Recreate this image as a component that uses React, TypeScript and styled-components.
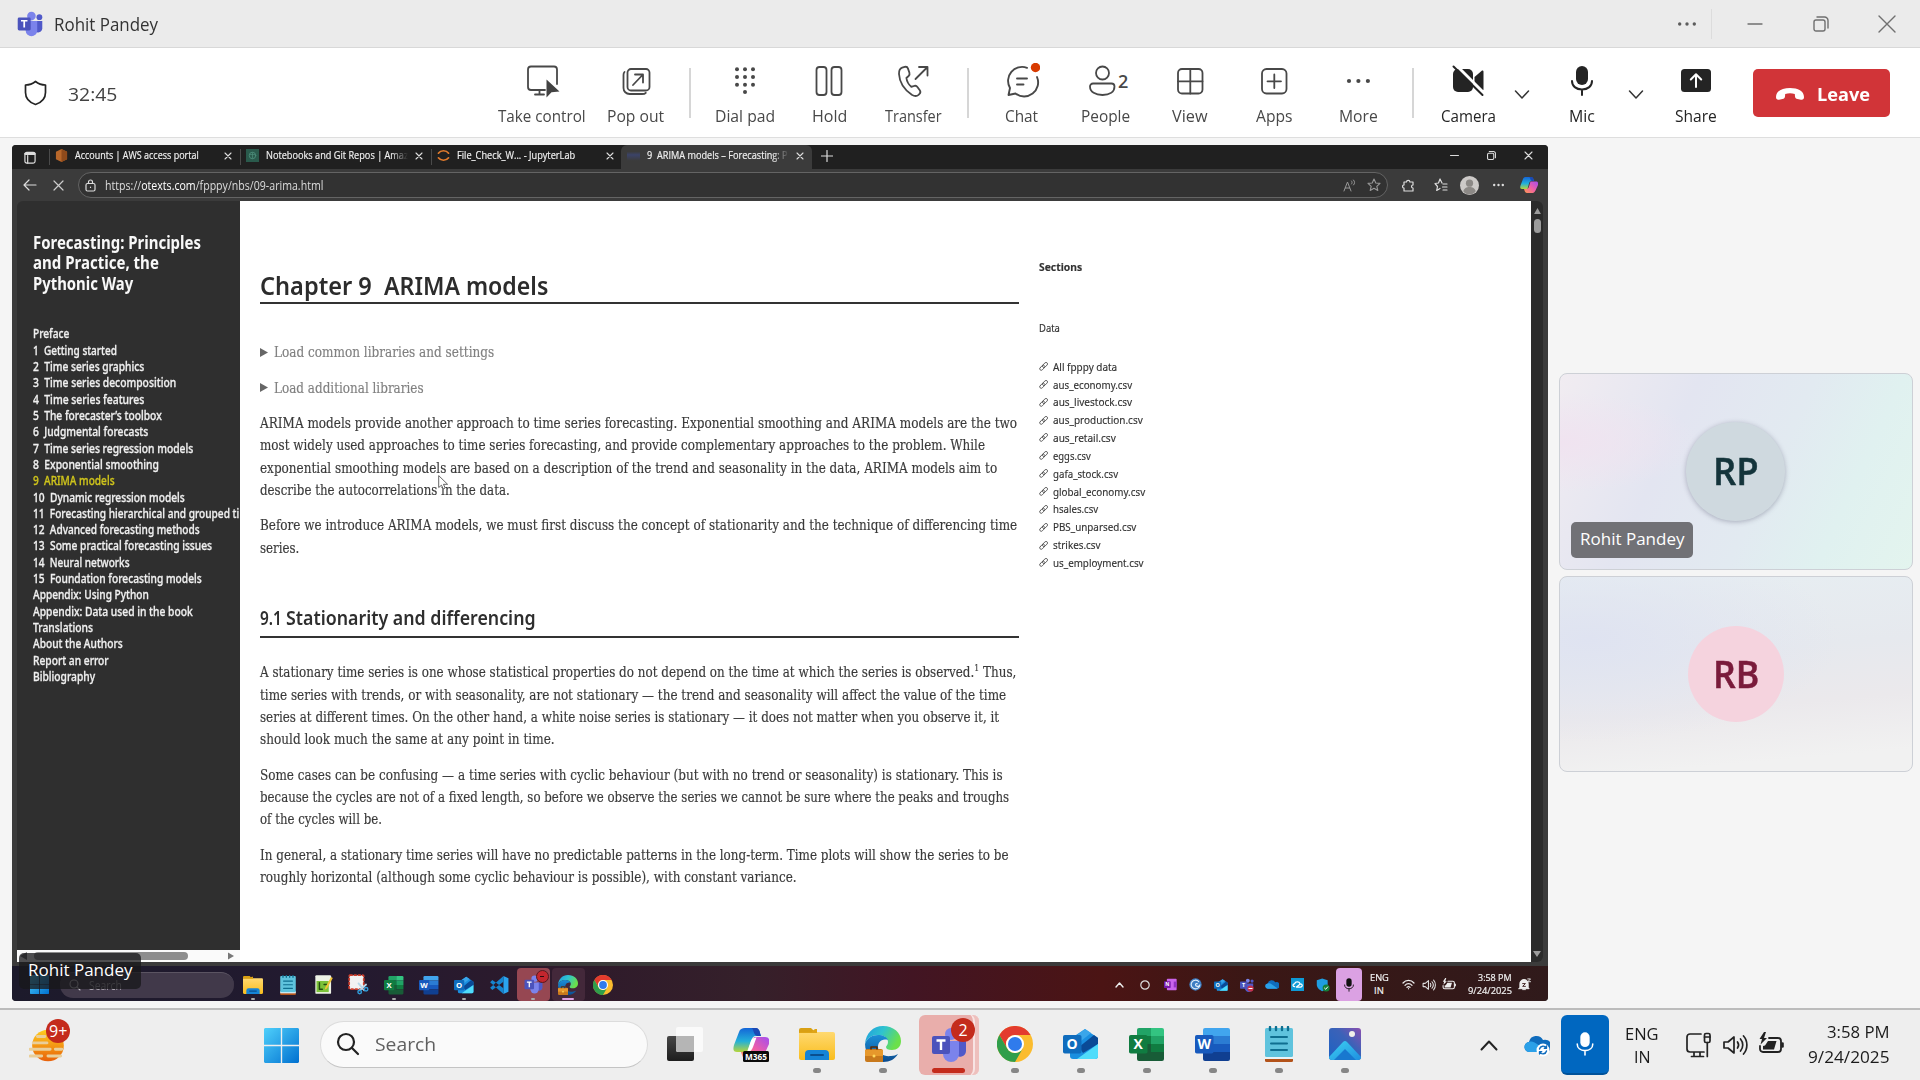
import React, { useLayoutEffect, useRef, useState } from "react";
import styled, { createGlobalStyle } from "styled-components";

const UI = `"Open Sans", "Noto Sans", sans-serif`;
const BOOK = `"Noto Sans", "Open Sans", sans-serif`;
const SERIF = `"DejaVu Serif Condensed", "DejaVu Serif", "Liberation Serif", serif`;

const Global = createGlobalStyle`
  * { box-sizing: border-box; }
  html, body { margin: 0; padding: 0; }
  body { width: 1920px; height: 1080px; overflow: hidden; background: #f5f5f5; font-family: ${UI}; }
  svg { display: block; flex: none; }
`;

/* Text condensed or widened so that it takes exactly the given width */
const FitBox = styled.span<{ $w: number }>`
  display: inline-block;
  flex: none;
  width: ${(p) => p.$w}px;
  white-space: pre;
`;
const FitInner = styled.span`
  display: inline-block;
  transform-origin: 0 50%;
  white-space: pre;
`;
function Fit({ w, children }: { w: number; children: React.ReactNode }) {
  const ref = useRef<HTMLSpanElement>(null);
  const [k, setK] = useState(1);
  useLayoutEffect(() => {
    const el = ref.current;
    if (el && el.offsetWidth) setK(w / el.offsetWidth);
  }, [w]);
  return (
    <FitBox $w={w}>
      <FitInner ref={ref} style={{ transform: `scaleX(${k})` }}>{children}</FitInner>
    </FitBox>
  );
}

const Screen = styled.div`
  width: 1920px;
  height: 1080px;
  display: flex;
  flex-direction: column;
  overflow: hidden;
  background: #f5f5f5;
`;

/* ---------- window title bar ---------- */
const TitleBar = styled.header`
  height: 48px;
  flex: none;
  display: flex;
  align-items: center;
  padding-left: 17px;
  background: #ebebeb;
  border-bottom: 1px solid #d8d8d8;
`;
const TitleText = styled.div`
  margin-left: 11px;
  font-size: 17.5px;
  line-height: 24px;
  color: #333;
`;
const WindowTools = styled.div`
  margin-left: auto;
  display: flex;
  align-items: center;
  height: 47px;
`;
const ToolSlot = styled.div<{ $w: number }>`
  width: ${(p) => p.$w}px;
  height: 100%;
  flex: none;
  display: flex;
  align-items: center;
  justify-content: center;
`;
const TitleRule = styled.div`
  width: 1px;
  height: 30px;
  background: #dcdcdc;
`;

/* ---------- call toolbar ---------- */
const CallBar = styled.div`
  height: 90px;
  flex: none;
  display: flex;
  background: #fff;
  border-bottom: 1px solid #dedede;
`;
const CallInfo = styled.div`
  width: 495px;
  flex: none;
  display: flex;
  align-items: center;
  padding-left: 24px;
`;
const Timer = styled.div`
  margin-left: 21px;
  padding-top: 3px;
  font-size: 19px;
  line-height: 26px;
  color: #424242;
`;
const CallButton = styled.button<{ $w: number; $dark?: boolean; $ml?: number }>`
  width: ${(p) => p.$w}px;
  margin: 0 0 0 ${(p) => p.$ml ?? 0}px;
  padding: 15px 0 0;
  flex: none;
  border: 0;
  background: none;
  display: flex;
  flex-direction: column;
  align-items: center;
  font: 400 16.5px/24px ${UI};
  color: ${(p) => (p.$dark ? "#242424" : "#484848")};
`;
const CallLabel = styled.div`
  margin-top: 5px;
  height: 24px;
`;
const PeopleIcon = styled.div`
  position: relative;
  height: 36px;
  width: 36px;
`;
const Count = styled.span`
  position: absolute;
  left: 30px;
  top: 6px;
  font-weight: 600;
  font-size: 18px;
  line-height: 24px;
`;
const BarRule = styled.div<{ $w: number }>`
  width: ${(p) => p.$w}px;
  flex: none;
  padding-top: 20px;
  display: flex;
  justify-content: center;
  &::after {
    content: "";
    width: 2px;
    height: 50px;
    background: #d6d6d6;
  }
`;
const Chevron = styled.div<{ $w: number }>`
  width: ${(p) => p.$w}px;
  flex: none;
  display: flex;
  justify-content: center;
  padding-top: 41px;
`;
const LeaveButton = styled.button`
  width: 137px;
  height: 48px;
  margin: 21px 0 0 3px;
  flex: none;
  display: flex;
  align-items: center;
  gap: 12px;
  padding: 2px 0 0 22px;
  border: 0;
  border-radius: 5px;
  background: #d13438;
  color: #fff;
  font: 700 18.5px/26px ${UI};
`;

/* ---------- meeting stage ---------- */
const Stage = styled.main`
  height: 870px;
  flex: none;
  display: flex;
  padding: 7px 7px 7px 12px;
  gap: 11px;
`;
const Shared = styled.section`
  position: relative;
  width: 1536px;
  height: 856px;
  flex: none;
  display: flex;
  flex-direction: column;
  border-radius: 4px;
  overflow: hidden;
  background: #3b3b3b;
`;
const TabStrip = styled.div`
  height: 24px;
  flex: none;
  display: flex;
  align-items: center;
  background: #202020;
  color: #f0f0f0;
`;
const Tab = styled.div<{ $active?: boolean }>`
  width: 190.8px;
  height: 24px;
  flex: none;
  display: flex;
  align-items: center;
  padding: 0 0 3px 6px;
  font-size: 11.5px;
  font-weight: 500;
  line-height: 16px;
  background: ${(p) => (p.$active ? "#3b3b3b" : "none")};
  border-radius: ${(p) => (p.$active ? "6px 6px 0 0" : "0")};
  background-image: ${(p) => (p.$active ? "none" : "linear-gradient(#4a4a4a, #4a4a4a)")};
  background-size: 1px 16px;
  background-position: 0 4px;
  background-repeat: no-repeat;
`;
const TabTitle = styled.div<{ $fade?: boolean }>`
  width: 142px;
  margin: -1px 7px 0 7px;
  overflow: hidden;
  -webkit-text-stroke: 0.2px currentColor;
  mask-image: ${(p) => (p.$fade ? "linear-gradient(90deg, #000 88%, transparent)" : "none")};
`;
const ActiveFavicon = styled.div`
  width: 13px;
  height: 13px;
  flex: none;
  background: linear-gradient(#3b3b3b 20%, #3b4368 45%, #3b3b3b 90%);
`;
const TabControls = styled.div`
  margin-left: auto;
  height: 24px;
  display: flex;
  padding: 0 1px 3px 0;
`;
const NavBar = styled.div`
  height: 32px;
  flex: none;
  display: flex;
  align-items: center;
  padding: 0 5px 0 3px;
`;
const Address = styled.div`
  width: 1310px;
  height: 26px;
  margin: 0 6px 0 5px;
  flex: none;
  display: flex;
  align-items: center;
  padding: 0 6px;
  border: 1px solid #646464;
  border-radius: 13px;
  background: #323232;
  color: #dcdcdc;
  font-size: 13px;
  line-height: 18px;
`;
const Url = styled.div`
  margin-left: 9px;
  margin-right: auto;
  & b { font-weight: 400; color: #fff; }
`;
const NavRule = styled.div`
  width: 1px;
  height: 13px;
  margin: 0 1px 0 2px;
  background: #5a5a5a;
`;

const PageRow = styled.div`
  height: 761px;
  flex: none;
  display: flex;
  padding: 0 5px;
`;
const Book = styled.nav`
  width: 223px;
  flex: none;
  display: flex;
  flex-direction: column;
  overflow: hidden;
  border-top-left-radius: 6px;
  background: #2f2f2f;
  color: #f8f8f8;
  font-family: ${BOOK};
`;
const BookTitle = styled.h2`
  margin: 32px 0 0 16px;
  font-size: 17px;
  font-weight: 700;
  line-height: 20.4px;
`;
const Toc = styled.ul`
  list-style: none;
  margin: 32px 0 0;
  padding: 0 0 0 16px;
  flex: 1;
  overflow: hidden;
  -webkit-text-stroke: 0.3px currentColor;
`;
const TocItem = styled.li<{ $on?: boolean }>`
  height: 16.33px;
  font-size: 12.4px;
  font-weight: 500;
  line-height: 16.33px;
  color: ${(p) => (p.$on ? "#cfc41c" : "#f0f0f0")};
`;
const HScroll = styled.div`
  height: 12px;
  flex: none;
  display: flex;
  align-items: center;
  padding: 0 6px 0 3px;
  background: #fafafa;
`;
const HThumb = styled.div`
  width: 154px;
  height: 8px;
  margin-left: 7px;
  margin-right: auto;
  border-radius: 4px;
  background: #8d8d8d;
`;
const Paper = styled.div`
  width: 1291px;
  flex: none;
  display: flex;
  background: #fff;
  padding-left: 19.5px;
  overflow: hidden;
`;
const Article = styled.article`
  width: 759.5px;
  flex: none;
  color: #3a3a3a;
  font: 400 14px/22.35px ${SERIF};
`;
const H1 = styled.h1`
  margin: 70px 0 37.3px;
  height: 33px;
  border-bottom: 2px solid #333;
  font: 600 25px/29px ${BOOK};
  color: #2c2c2c;
`;
const H2 = styled.h2`
  margin: 45px 0 23.5px;
  height: 33.8px;
  border-bottom: 2px solid #333;
  font: 600 19.5px/27px ${BOOK};
  color: #2e2e2e;
`;
const Details = styled.div`
  height: 22.35px;
  margin-bottom: 13px;
  display: flex;
  align-items: center;
  gap: 6px;
  color: #808080;
  -webkit-text-stroke: 0.15px currentColor;
`;
const P = styled.p`
  margin: 0 0 13px;
  -webkit-text-stroke: 0.15px currentColor;
`;
const Line = styled.span`
  display: block;
  height: 22.35px;
`;
const Sup = styled.sup`
  font-size: 9px;
  line-height: 0;
`;
const Aside = styled.aside`
  margin-left: 19.5px;
  padding-top: 56.5px;
  font: 400 10.8px/17.85px ${BOOK};
  color: #333;
  -webkit-text-stroke: 0.15px currentColor;
`;
const AsideHead = styled.div<{ $bold?: boolean; $gap: number }>`
  height: 17.85px;
  margin-bottom: ${(p) => p.$gap}px;
  font-weight: ${(p) => (p.$bold ? 700 : 400)};
`;
const FileRow = styled.div`
  height: 17.85px;
  display: flex;
  align-items: center;
  gap: 5px;
`;
const VScroll = styled.div`
  width: 12px;
  flex: none;
  display: flex;
  flex-direction: column;
  align-items: center;
  padding: 7px 0 5px;
  border-radius: 0 6px 6px 0;
  background: #2b2b2b;
`;
const VThumb = styled.div`
  width: 7px;
  height: 14px;
  margin: 5px 0 auto;
  border-radius: 4px;
  background: #9c9c9c;
`;

const InnerBar = styled.div`
  height: 35px;
  margin-top: auto;
  flex: none;
  display: flex;
  align-items: center;
  padding-top: 2px;
  background: linear-gradient(90deg, #1c1a2b 0, #231a30 330px, #2e1a2b 560px, #35202a 740px, #421523 900px, #4b1414 1090px, #3a1715 1240px, #301a1b 1536px);
  color: #f2f2f2;
`;
const InnerSearch = styled.div`
  width: 174px;
  height: 26px;
  margin: 0 1.5px 0 11px;
  display: flex;
  align-items: center;
  gap: 8px;
  padding-left: 9px;
  border-radius: 13px;
  background: #41394a;
  border-top: 1px solid #5b5462;
  font-size: 12px;
  color: #a9a4ae;
`;
const InnerSlot = styled.div<{ $w: number; $tile?: string }>`
  position: relative;
  width: ${(p) => p.$w}px;
  height: 33px;
  flex: none;
  display: flex;
  align-items: center;
  justify-content: center;
  border-radius: 4px;
  background: ${(p) => p.$tile ?? "none"};
`;
const InnerMark = styled.span<{ $wide?: boolean }>`
  position: absolute;
  bottom: 1px;
  left: calc(50% - ${(p) => (p.$wide ? 6 : 2)}px);
  width: ${(p) => (p.$wide ? 12 : 4)}px;
  height: 2px;
  border-radius: 1px;
  background: ${(p) => (p.$wide ? "#dda0e2" : "#aaa")};
`;
const BusyDot = styled.span`
  position: absolute;
  right: 1px;
  top: 2px;
  width: 13px;
  height: 13px;
  border-radius: 50%;
  background: #c4262e;
  border: 1px solid #571a20;
  &::after {
    content: "";
    position: absolute;
    left: 3.5px;
    top: 5px;
    width: 4px;
    height: 1px;
    background: #2b0c0e;
  }
`;
const InnerTray = styled.div`
  margin-left: auto;
  display: flex;
  align-items: center;
`;
const InnerText = styled.div<{ $w: number; $align: string }>`
  width: ${(p) => p.$w}px;
  display: flex;
  flex-direction: column;
  align-items: ${(p) => p.$align};
  font-size: 9.5px;
  line-height: 12.7px;
  -webkit-text-stroke: 0.2px currentColor;
`;
const NameTag = styled.div<{ $left: number; $bottom: number; $bg: string }>`
  position: absolute;
  left: ${(p) => p.$left}px;
  bottom: ${(p) => p.$bottom}px;
  width: 122px;
  height: 36px;
  padding: 4px 0 0 9px;
  border-radius: 5px;
  background: ${(p) => p.$bg};
  color: #fff;
  font-size: 17px;
  line-height: 25px;
`;
const Pointer = styled.div`
  position: absolute;
  left: 426px;
  top: 330px;
`;

/* ---------- participants ---------- */
const Roster = styled.aside`
  width: 354px;
  flex: none;
  display: flex;
  flex-direction: column;
  gap: 6px;
  padding-top: 228px;
`;
const Tile = styled.div<{ $bg: string; $h: number }>`
  position: relative;
  height: ${(p) => p.$h}px;
  flex: none;
  display: flex;
  align-items: center;
  justify-content: center;
  padding: 0 1px 1px 0;
  border: 1px solid #cdd0d6;
  border-radius: 8px;
  background: ${(p) => p.$bg};
`;
const Avatar = styled.div<{ $size: number; $bg: string; $fg: string; $shadow?: boolean }>`
  width: ${(p) => p.$size}px;
  height: ${(p) => p.$size}px;
  padding-bottom: 2px;
  border-radius: 50%;
  display: flex;
  align-items: center;
  justify-content: center;
  background: ${(p) => p.$bg};
  color: ${(p) => p.$fg};
  box-shadow: ${(p) => (p.$shadow ? "0 1px 5px rgba(60,60,90,.35)" : "none")};
  font-weight: 600;
  font-size: 38px;
  line-height: 50px;
  -webkit-text-stroke: 0.5px currentColor;
`;

/* ---------- taskbar ---------- */
const TaskBar = styled.footer`
  height: 72px;
  flex: none;
  display: flex;
  align-items: center;
  border-top: 2px solid #bcbcbc;
  background: #eee;
`;
const Widget = styled.div`
  position: relative;
  width: 264px;
  flex: none;
  padding-left: 29px;
`;
const Badge = styled.span<{ $left: number; $top: number }>`
  position: absolute;
  left: ${(p) => p.$left}px;
  top: ${(p) => p.$top}px;
  width: 24px;
  height: 24px;
  padding-bottom: 1px;
  border-radius: 50%;
  display: flex;
  align-items: center;
  justify-content: center;
  background: #c42b1c;
  color: #fff;
  font-size: 16px;
  line-height: 22px;
`;
const SearchPill = styled.div`
  width: 328px;
  height: 47px;
  margin: -1px 4px 0 21px;
  flex: none;
  display: flex;
  align-items: center;
  gap: 15px;
  padding: 0 0 1px 15px;
  border: 1.5px solid #dcdcdc;
  border-bottom-color: #c4c4c4;
  border-radius: 24px;
  background: #fafafa;
  color: #606060;
  font-size: 19px;
  line-height: 28px;
`;
const AppSlot = styled.div`
  position: relative;
  width: 66px;
  height: 70px;
  flex: none;
  display: flex;
  align-items: center;
  justify-content: center;
  padding-bottom: 2px;
`;
const RunMark = styled.span<{ $active?: boolean }>`
  position: absolute;
  bottom: 7px;
  left: ${(p) => (p.$active ? 16 : 29)}px;
  width: ${(p) => (p.$active ? 33 : 8)}px;
  height: 5px;
  border-radius: 3px;
  background: ${(p) => (p.$active ? "#c42b1c" : "#868686")};
`;
const ActiveTile = styled.div`
  width: 60px;
  height: 60px;
  margin-top: 2px;
  display: flex;
  align-items: center;
  justify-content: center;
  border-radius: 6px;
  background: #e9aeab;
  box-shadow: inset -5px 0 0 -1px #eec0bd, inset -8px 0 0 -2px #f8e4e3;
`;
const Tray = styled.div`
  margin-left: auto;
  height: 70px;
  display: flex;
  align-items: center;
  color: #1b1b1b;
`;
const TraySlot = styled.div<{ $w: number }>`
  width: ${(p) => p.$w}px;
  flex: none;
  display: flex;
  justify-content: center;
`;
const MicTile = styled.div`
  width: 48px;
  height: 60px;
  flex: none;
  display: flex;
  align-items: center;
  justify-content: center;
  border-radius: 6px;
  background: #0067c0;
  border-bottom: 2px solid #00529a;
`;
const TrayText = styled.div<{ $w: number; $align: string; $lh: number; $lift: number }>`
  width: ${(p) => p.$w}px;
  flex: none;
  display: flex;
  flex-direction: column;
  align-items: ${(p) => p.$align};
  font-size: 17px;
  line-height: ${(p) => p.$lh}px;
  padding-bottom: ${(p) => p.$lift}px;
`;

/* ---------- icons ---------- */
type G = { w?: number; h?: number; vb?: string; children?: React.ReactNode };
const Svg = ({ w = 36, h = w, vb = "0 0 36 36", children }: G) => (
  <svg width={w} height={h} viewBox={vb} fill="none" strokeLinecap="round" strokeLinejoin="round">{children}</svg>
);
const Ink = ({ children, c = "#484848", s = 2, ...r }: G & { c?: string; s?: number }) => (
  <Svg {...r}><g stroke={c} strokeWidth={s}>{children}</g></Svg>
);

const TeamsIcon = ({ s }: { s: number }) => (
  <Svg w={s}>
    <circle cx="20" cy="7" r="6" fill="#7b83eb" />
    <circle cx="31" cy="8.5" r="4" fill="#5059c9" />
    <path d="M24 14h11v10a6 6 0 0 1-11 3z" fill="#5059c9" />
    <path d="M12 14h16v13a8 8 0 0 1-16 0z" fill="#7b83eb" />
    <rect x="1" y="9" width="18" height="18" rx="2" fill="#4b53bc" />
    <path d="M5.5 13.5h9M10 13.5v9.5" stroke="#fff" strokeWidth="2.4" strokeLinecap="butt" />
  </Svg>
);
const Letter = ({ c, ch }: { c: string; ch: string }) => (
  <>
    <rect x="0" y="9" width="18.5" height="18.5" rx="1.8" fill={c} />
    <text x="9.2" y="23.4" textAnchor="middle" fontFamily="Open Sans, sans-serif" fontWeight="700" fontSize="14" fill="#fff">{ch}</text>
  </>
);
const ExcelIcon = ({ s }: { s: number }) => (
  <Svg w={s}>
    <path d="M8 10h14V2H10a2 2 0 0 0-2 2z" fill="#21a366" /><path d="M22 2h11a2 2 0 0 1 2 2v6H22z" fill="#33c481" />
    <path d="M22 10h13v8H22z" fill="#21a366" /><path d="M8 10h14v8H8z" fill="#107c41" />
    <path d="M22 18h13v8H22z" fill="#107c41" /><path d="M8 18h14v8H8zM8 26h27v7a2 2 0 0 1-2 2H10a2 2 0 0 1-2-2z" fill="#185c37" />
    <Letter c="#107c41" ch="X" />
  </Svg>
);
const WordIcon = ({ s }: { s: number }) => (
  <Svg w={s}>
    <path d="M8 10V4a2 2 0 0 1 2-2h23a2 2 0 0 1 2 2v6z" fill="#41a5ee" />
    <path d="M8 10h27v8H8z" fill="#2b7cd3" /><path d="M8 18h27v8H8z" fill="#185abd" />
    <path d="M8 26h27v7a2 2 0 0 1-2 2H10a2 2 0 0 1-2-2z" fill="#103f91" />
    <Letter c="#185abd" ch="W" />
  </Svg>
);
const OutlookIcon = ({ s }: { s: number }) => (
  <Svg w={s}>
    <path d="M7 13 22 3l13 9v18a3 3 0 0 1-3 3H10a3 3 0 0 1-3-3z" fill="#1a8fe0" />
    <path d="M10 12 22 3l6 4-15 12z" fill="#3aa6ea" />
    <path d="M16 21 31 9l4 3v6L20 27z" fill="#0a4a96" />
    <path d="M14 33 35 18v12a3 3 0 0 1-3 3z" fill="#4fdcfb" />
    <Letter c="#0f6cbd" ch="O" />
  </Svg>
);
const FolderIcon = ({ s }: { s: number }) => (
  <Svg w={s}>
    <path d="M0 4a2 2 0 0 1 2-2h10l4 4H0z" fill="#d9a013" /><path d="M0 6h34a2 2 0 0 1 2 2v24a2 2 0 0 1-2 2H2a2 2 0 0 1-2-2z" fill="url(#fold)" />
    <path d="M0 6h12l4-3h2v4H0z" fill="#dfa516" />
    <path d="M6 34V28a4 4 0 0 1 4-4h16a4 4 0 0 1 4 4v6z" fill="#1584d6" />
    <path d="M12 29h12" stroke="#0a4f8f" strokeWidth="2" />
    <defs><linearGradient id="fold" x1="0" y1="0" x2="0" y2="1"><stop stopColor="#ffd970" /><stop offset="1" stopColor="#f9bd1d" /></linearGradient></defs>
  </Svg>
);
const EdgeIcon = ({ s }: { s: number }) => (
  <Svg w={s}>
    <defs>
      <linearGradient id="eg1" x1="0" y1="0" x2="1" y2=".4"><stop stopColor="#1f9be0" /><stop offset=".5" stopColor="#2fc3cf" /><stop offset="1" stopColor="#6be04a" /></linearGradient>
      <linearGradient id="eg2" x1="0" y1="0" x2="0" y2="1"><stop stopColor="#1b8fd8" /><stop offset="1" stopColor="#0c4c8f" /></linearGradient>
    </defs>
    <path d="M0 18C1 7 8 0 18 0c11 0 18 7 18 15 0 6-4 9-9 9-4 0-6-1-6-3 0-1 2-2 2-5 0-4-4-7-10-7C7 9 2 12 0 18z" fill="url(#eg1)" />
    <path d="M0 18c2-6 7-9 13-9 5 0 9 2 10 5-7-2-10 3-10 7 0 6 6 10 13 9 3 0 5-1 7-2-3 5-8 8-15 8C8 36 0 28 0 18z" fill="url(#eg2)" />
    <path d="M0 25a2 2 0 0 1 2-2h14a2 2 0 0 1 2 2v11H2a2 2 0 0 1-2-2z" fill="#c8791c" /><path d="M0 24h18v6H0z" fill="#e6982c" />
    <path d="M6 23v-2h6v2" stroke="#5b2b06" strokeWidth="1.6" /><circle cx="9" cy="30" r="1.5" fill="#ffd75a" />
  </Svg>
);
const ChromeIcon = ({ s }: { s: number }) => (
  <Svg w={s}>
    <circle cx="18" cy="18" r="18" fill="#fbbc2e" />
    <path d="M2.4 9A18 18 0 0 1 33.6 9H18a9 9 0 0 0-7.8 13.5z" fill="#e33b2e" />
    <path d="M2.4 9A18 18 0 0 0 18 36l7.8-13.5A9 9 0 0 1 10.2 22.5z" fill="#2f9e4b" />
    <circle cx="18" cy="18" r="9" fill="#fff" /><circle cx="18" cy="18" r="7" fill="#2f7bec" />
  </Svg>
);
const NotepadIcon = ({ s }: { s: number }) => (
  <Svg w={s}>
    <rect x="4" y="29" width="28" height="7" rx="1.5" fill="#b3531a" /><path d="M4 29h28v4H4z" fill="#e8f4f8" />
    <rect x="4" y="2" width="28" height="29" rx="1.5" fill="#5fc3dd" />
    <path d="M10 11h16M10 17.5h16M10 24h16" stroke="#0f6f90" strokeWidth="2" />
    <path d="M9 1v3M15 1v3M21 1v3M27 1v3" stroke="#0f6f90" strokeWidth="2.4" />
  </Svg>
);
const PhotosIcon = () => (
  <Svg>
    <defs>
      <linearGradient id="ph" x1="0" y1="1" x2="1" y2="0"><stop stopColor="#1c62c4" /><stop offset=".6" stopColor="#3b62b8" /><stop offset="1" stopColor="#8b4fb0" /></linearGradient>
      <linearGradient id="ph2" x1="0" y1="0" x2="1" y2="1"><stop stopColor="#3dd0f2" /><stop offset="1" stopColor="#1e8fe0" /></linearGradient>
    </defs>
    <rect x="2" y="2" width="32" height="32" rx="3" fill="url(#ph)" />
    <path d="M2 31 16 16a3 3 0 0 1 4 0l14 15a3 3 0 0 1-3 3H5a3 3 0 0 1-3-3z" fill="url(#ph2)" />
    <path d="m7 34 11-11 11 11z" fill="#1878cf" /><circle cx="25" cy="8" r="3" fill="#f2f0ea" />
  </Svg>
);
const CopilotMark = ({ s, tag }: { s: number; tag?: boolean }) => (
  <Svg w={s}>
    <defs>
      <linearGradient id="cp1" x1="0" y1="0" x2="0" y2="1"><stop stopColor="#1465d8" /><stop offset=".55" stopColor="#23b0d9" /><stop offset="1" stopColor="#b6d63a" /></linearGradient>
      <linearGradient id="cp2" x1="1" y1="0" x2="0" y2="1"><stop stopColor="#a24df0" /><stop offset=".5" stopColor="#ee5fa8" /><stop offset="1" stopColor="#ff9a4d" /></linearGradient>
    </defs>
    <path d="M12 2h10c3 0 4 2 5 5l1 3h-5c-3 0-4 2-5 5l-3 11H4c-4 0-4-3-3-7L6 6c1-3 3-4 6-4z" fill="url(#cp1)" />
    <path d="M18 2h5c2 0 4 2 4 5l1 3h-4c-4-1-3-8-6-8z" fill="#1a49b5" />
    <path d="M24 34H14c-3 0-4-2-5-5l-1-3h5c3 0 4-2 5-5l3-10h11c4 0 5 3 4 7l-5 11c-2 4-4 5-7 5z" fill="url(#cp2)" />
    {tag && (
      <>
        <path d="m14 26 3.500-10c1-3 3-4.500 6-4.500L20 21c-1 3-3 5-6 5z" fill="#fff" />
        <rect x="10" y="25" width="26" height="11" rx="1.5" fill="#0a0a0a" />
        <text x="23" y="34" textAnchor="middle" fontFamily="Open Sans, sans-serif" fontWeight="700" fontSize="9" fill="#fff" textLength="22" lengthAdjust="spacingAndGlyphs">M365</text>
      </>
    )}
  </Svg>
);
const StartIcon = ({ s }: { s: number }) => (
  <Svg w={s}>
    <defs><linearGradient id="win" x1="0" y1="0" x2="1" y2="1"><stop stopColor="#4fd0fb" /><stop offset="1" stopColor="#0070d0" /></linearGradient></defs>
    <path d="M1 0h16.3v17.3H0V1zM18.7 0H35l1 1v16.3H18.7zM0 18.7h17.3V36H1l-1-1zM18.7 18.7H36V35l-1 1H18.7z" fill="url(#win)" />
  </Svg>
);
const MicGlyph = ({ s, c }: { s: number; c: string }) => (
  <Svg w={s}>
    <rect x="12" y="3" width="12" height="19" rx="6" fill={c} />
    <path d="M8 18c0 5 4 8.500 10 8.500s10-3.500 10-8.500M18 27v5" stroke={c} strokeWidth="2" />
  </Svg>
);
const Close = ({ s, c, t = 1.2 }: { s: number; c: string; t?: number }) => (
  <Ink w={s} vb={`0 0 ${s} ${s}`} c={c} s={t}><path d={`M1 1l${s - 2} ${s - 2}M${s - 1} 1L1 ${s - 1}`} /></Ink>
);
const Restore = ({ s, c, t }: { s: number; c: string; t: number }) => (
  <Ink w={s} vb="0 0 16 16" c={c} s={t}><rect x="1" y="4" width="11" height="11" rx="2" /><path d="M4 1h7.500A3.500 3.500 0 0 1 15 4.500V12" /></Ink>
);
const Dots = ({ s, c, r }: { s: number; c: string; r: number }) => (
  <Svg w={s} h={8} vb={`0 0 ${s} 8`}><g fill={c}><circle cx={r} cy="4" r={r} /><circle cx={s / 2} cy="4" r={r} /><circle cx={s - r} cy="4" r={r} /></g></Svg>
);
const Volume = ({ s, c, t = 2 }: { s: number; c: string; t?: number }) => (
  <Ink w={s} vb="0 0 26 26" c={c} s={t}>
    <path d="M2 10h4l6-5v16l-6-5H2z" /><path d="M15.500 10c1.300 1.800 1.300 4.200 0 6M18.500 7c3 3.500 3 8.500 0 12M21.500 4c4.500 5 4.500 13 0 18" />
  </Ink>
);
const Battery = ({ s, c, t = 2 }: { s: number; c: string; t?: number }) => (
  <Svg w={s} vb="0 0 26 26">
    <path d="M11 6h9a3 3 0 0 1 3 3v8a3 3 0 0 1-3 3H5a3 3 0 0 1-3-3v-3" stroke={c} strokeWidth={t} />
    <path d="M10 9h8.500l-2.500 8.500H5V14l2-.5z" fill={c} /><path d="M24.500 11.500v3" stroke={c} strokeWidth="2.600" />
    <path d="M6 0 1.500 7H4l-1.500 5.500L9 6H6l2-6z" fill={c} />
  </Svg>
);
const Cloud = ({ s, sync }: { s: number; sync?: boolean }) => (
  <Svg w={s} vb="0 0 26 26">
    <path d="M6 20a5 5 0 0 1-1-10 7.500 7.500 0 0 1 14-2 6 6 0 0 1 4 12z" fill="#0f6cbd" />
    <path d="M6 20a5 5 0 0 1-1-10c3-1 5 0 8 2l10 7c-1 .7-2 1-3 1z" fill="#2ba0e8" />
    {sync && (<><circle cx="19" cy="18" r="6.500" fill="#fff" /><path d="M15.500 17a3.700 3.700 0 0 1 6.800-1M22.500 19a3.700 3.700 0 0 1-6.800 1M22.500 14v2.200h-2.200M15.500 22v-2.200h2.200" stroke="#0f6cbd" strokeWidth="1.400" /></>)}
  </Svg>
);
const Magnifier = ({ s, c, t }: { s: number; c: string; t: number }) => (
  <Ink w={s} vb="0 0 24 24" c={c} s={t}><circle cx="10" cy="10" r="8" /><path d="m16 16 6 6" /></Ink>
);
const LinkIcon = () => (
  <Ink w={9} vb="0 0 18 18" c="#555" s={1.700}>
    <rect x="6" y="3" width="12" height="6" rx="3" transform="rotate(-45 12 6)" />
    <rect x="0.500" y="8.500" width="12" height="6" rx="3" transform="rotate(-45 6.500 11.500)" />
  </Ink>
);

/* ---------- data ---------- */
const toc: [string, number][] = [
  ["Preface", 36], ["1  Getting started", 84], ["2  Time series graphics", 111.5], ["3  Time series decomposition", 143],
  ["4  Time series features", 111], ["5  The forecaster’s toolbox", 129], ["6  Judgmental forecasts", 115],
  ["7  Time series regression models", 160], ["8  Exponential smoothing", 126], ["9  ARIMA models", 81.5],
  ["10  Dynamic regression models", 152], ["11  Forecasting hierarchical and grouped ti", 206.5],
  ["12  Advanced forecasting methods", 167], ["13  Some practical forecasting issues", 179],
  ["14  Neural networks", 96.5], ["15  Foundation forecasting models", 168.5], ["Appendix: Using Python", 116],
  ["Appendix: Data used in the book", 160], ["Translations", 60], ["About the Authors", 89.5], ["Report an error", 76], ["Bibliography", 62],
];
const files: [string, number][] = [
  ["All fpppy data", 64.5], ["aus_economy.csv", 79.5], ["aus_livestock.csv", 79], ["aus_production.csv", 89.5], ["aus_retail.csv", 62.5],
  ["eggs.csv", 37.5], ["gafa_stock.csv", 65.5], ["global_economy.csv", 92], ["hsales.csv", 45.5], ["PBS_unparsed.csv", 83],
  ["strikes.csv", 47.5], ["us_employment.csv", 91],
];
type L = [React.ReactNode, number];
const intro: L[][] = [
  [
    ["ARIMA models provide another approach to time series forecasting. Exponential smoothing and ARIMA models are the two", 757],
    ["most widely used approaches to time series forecasting, and provide complementary approaches to the problem. While", 724.5],
    ["exponential smoothing models are based on a description of the trend and seasonality in the data, ARIMA models aim to", 737],
    ["describe the autocorrelations in the data.", 249.5],
  ],
  [
    ["Before we introduce ARIMA models, we must first discuss the concept of stationarity and the technique of differencing time", 757],
    ["series.", 39.5],
  ],
];
const section: L[][] = [
  [
    [<>A stationary time series is one whose statistical properties do not depend on the time at which the series is observed.<Sup>1</Sup> Thus,</>, 756.5],
    ["time series with trends, or with seasonality, are not stationary — the trend and seasonality will affect the value of the time", 746.5],
    ["series at different times. On the other hand, a white noise series is stationary — it does not matter when you observe it, it", 739.5],
    ["should look much the same at any point in time.", 294.5],
  ],
  [
    ["Some cases can be confusing — a time series with cyclic behaviour (but with no trend or seasonality) is stationary. This is", 743],
    ["because the cycles are not of a fixed length, so before we observe the series we cannot be sure where the peaks and troughs", 749],
    ["of the cycles will be.", 121.5],
  ],
  [
    ["In general, a stationary time series will have no predictable patterns in the long-term. Time plots will show the series to be", 748.5],
    ["roughly horizontal (although some cyclic behaviour is possible), with constant variance.", 536.5],
  ],
];
const Paras = ({ items }: { items: L[][] }) => (
  <>{items.map((p, i) => <P key={i}>{p.map(([t, w], j) => <Line key={j}><Fit w={w}>{t}</Fit></Line>)}</P>)}</>
);
const Call = ({ w, label, lw, dark, ml, children }: { w: number; label: string; lw: number; dark?: boolean; ml?: number; children: React.ReactNode }) => (
  <CallButton $w={w} $dark={dark} $ml={ml}>{children}<CallLabel><Fit w={lw}>{label}</Fit></CallLabel></CallButton>
);
const Down = () => <Ink w={16} h={12} vb="0 0 16 12" c="#333" s={1.5}><path d="m1.500 2 6.500 7 6.500-7" /></Ink>;

export default function App() {
  return (
    <Screen>
      <Global />
      <TitleBar>
        <TeamsIcon s={26} />
        <TitleText><Fit w={104.500}>Rohit Pandey</Fit></TitleText>
        <WindowTools>
          <ToolSlot $w={48}><Dots s={18} c="#5c5c5c" r={1.700} /></ToolSlot>
          <TitleRule />
          <ToolSlot $w={21} />
          <ToolSlot $w={44}><Ink w={16} h={4} vb="0 0 16 4" c="#707070" s={1.300}><path d="M1 2h14" /></Ink></ToolSlot>
          <ToolSlot $w={88}><Restore s={16} c="#707070" t={1.400} /></ToolSlot>
          <ToolSlot $w={43}><Close s={18} c="#707070" t={1.400} /></ToolSlot>
          <ToolSlot $w={12} />
        </WindowTools>
      </TitleBar>

      <CallBar>
        <CallInfo>
          <Ink w={23} h={26} vb="0 0 23 26" c="#242424" s={1.700}><path d="M11.500 1.500C8.500 4 5 5 1.500 5v7.500c0 6 4 10 10 12 6-2 10-6 10-12V5c-3.500 0-7-1-10-3.500z" /></Ink>
          <Timer><Fit w={49}>32:45</Fit></Timer>
        </CallInfo>
        <Call w={94} label="Take control" lw={87.500}>
          <Svg>
            <path d="M21 27H7a3 3 0 0 1-3-3V6.500a3 3 0 0 1 3-3h23a3 3 0 0 1 3 3V21M11 31.500h9M15.500 27v4.500" stroke="#484848" strokeWidth="1.800" />
            <path d="M22.500 16.500v18l5-5.200 8-.8z" fill="#424242" />
          </Svg>
        </Call>
        <Call w={93} label="Pop out" lw={57}>
          <Ink s={1.800}><rect x="9.500" y="6" width="22" height="21.500" rx="3.500" /><path d="M6.500 9C5.600 10 5.500 11 5.500 12v13a6 6 0 0 0 6 6H24c1.500 0 3-.3 3.800-1.200M15 22l10-10.500M17 11.500h8v8" /></Ink>
        </Call>
        <BarRule $w={16} />
        <Call w={94} label="Dial pad" lw={60}>
          <Svg><g fill="#484848">{[6.3, 14, 21.7].flatMap((y) => [10, 18, 26].map((x) => <circle key={`${x}-${y}`} cx={x} cy={y} r="2" />))}<circle cx="18" cy="29" r="2" /></g></Svg>
        </Call>
        <Call w={74} label="Hold" lw={35}><Ink s={1.800}><rect x="5.500" y="4" width="10" height="28" rx="3" /><rect x="20.500" y="4" width="10" height="28" rx="3" /></Ink></Call>
        <Call w={94} label="Transfer" lw={57}>
          <Ink s={1.800}>
            <path d="M7.200 4.700 9.700 3.900c1.500-.4 2.800.3 3.300 1.700l1.400 4.200c.4 1.200.1 2.300-.8 3.200l-2.200 2c.4 3 2.300 6.600 4.900 8.800l3-.9c1.200-.4 2.400 0 3.100 1l2.400 3.400c.8 1.200.7 2.600-.3 3.600l-1 1c-1.800 1.600-4.300 1.300-6.700-.2C9 26.500 4.500 19 4 11c-.1-3 .9-5.500 3.200-6.300z" />
            <path d="m20.500 16 12-12M24 4h8.500v8.500" />
          </Ink>
        </Call>
        <BarRule $w={16} />
        <Call w={92} label="Chat" lw={33.500}>
          <Svg>
            <path d="M23 4.800A14 14 0 0 0 6 25l-1.500 7 7-1.500A14 14 0 0 0 33 14M13 15.500h10M13 21.500h6.500" stroke="#484848" strokeWidth="1.900" />
            <circle cx="31.500" cy="4.500" r="4.700" fill="#d83b01" />
          </Svg>
        </Call>
        <CallButton $w={76}>
          <PeopleIcon>
            <Svg w={40} h={36} vb="-4 0 40 36">
              <g stroke="#484848" strokeWidth="1.800" transform="translate(-3.500 0)">
                <circle cx="14" cy="10" r="6.500" /><path d="M4.500 20.500h18.500a3 3 0 0 1 3 3C26 29 21 32 14 32S1.500 29 1.500 23.500a3 3 0 0 1 3-3z" />
              </g>
            </Svg>
            <Count>2</Count>
          </PeopleIcon>
          <CallLabel><Fit w={49.500}>People</Fit></CallLabel>
        </CallButton>
        <Call w={92} label="View" lw={35.500}><Ink s={1.800}><rect x="6" y="6" width="24.500" height="24.500" rx="4" /><path d="M18.300 6v24.500M6 18.300h24.500" /></Ink></Call>
        <Call w={76} label="Apps" lw={37}><Ink s={1.800}><rect x="6" y="6" width="24.500" height="24.500" rx="4.500" /><path d="M18.300 11.500v13.500M11.500 18.300h13.500" /></Ink></Call>
        <Call w={92} label="More" lw={39}><Svg><g fill="#484848"><circle cx="9" cy="18" r="2.100" /><circle cx="18.400" cy="18" r="2.100" /><circle cx="27.900" cy="18" r="2.100" /></g></Svg></Call>
        <BarRule $w={18} />
        <Call w={92} label="Camera" lw={55} dark>
          <Svg>
            <rect x="3" y="6" width="20" height="23" rx="5" fill="#242424" /><path d="m24.500 14 7-6c1-.8 2-.3 2 .8v17.400c0 1.100-1 1.600-2 .8l-7-6z" fill="#242424" />
            <path d="M6.500 2.500 35 31" stroke="#fff" strokeWidth="3" /><path d="M3.500 3.500 32.500 32" stroke="#242424" strokeWidth="2" />
          </Svg>
        </Call>
        <Chevron $w={16}><Down /></Chevron>
        <Call w={96} label="Mic" lw={26} dark ml={4}><MicGlyph s={36} c="#242424" /></Call>
        <Chevron $w={12}><Down /></Chevron>
        <Call w={108} label="Share" lw={41.500} dark>
          <Svg><rect x="3" y="6" width="30" height="23" rx="3.500" fill="#242424" /><path d="M18 24V11.500M12.800 16.500l5.200-5.200 5.200 5.200" stroke="#fff" strokeWidth="2" /></Svg>
        </Call>
        <LeaveButton>
          <Svg w={30} h={14} vb="0 0 30 14"><path d="M1 10C1 4 7 1 15 1s14 3 14 9c0 2-1 3-3 2.700l-3.500-.6c-1.500-.3-2.300-1.200-2.500-2.700L19.800 7a15 15 0 0 0-9.600 0L10 9.400c-.2 1.500-1 2.400-2.500 2.700l-3.500.6C2 13 1 12 1 10z" fill="#fff" /></Svg>
          <Fit w={53}>Leave</Fit>
        </LeaveButton>
      </CallBar>

      <Stage>
        <Shared>
          <TabStrip>
            <ToolSlot $w={36}><Ink w={12} h={13} vb="0 0 13 14" c="#ddd" s={1.300}><rect x="1" y="1.500" width="11" height="11.500" rx="2" /><path d="M1.500 3h10" strokeWidth="2.500" /><path d="M4 5v8" /></Ink></ToolSlot>
            <ToolSlot $w={1} />
            <Tab>
              <Svg w={13} vb="0 0 14 14"><path d="M7 0l6 3v8l-6 3-6-3V3z" fill="#b8672a" /><path d="M7 0l6 3v8l-6 3z" fill="#8f4a1b" /></Svg>
              <TabTitle><Fit w={123.500}>Accounts | AWS access portal</Fit></TabTitle><Close s={8} c="#ddd" t={1.100} />
            </Tab>
            <Tab>
              <Svg w={13} vb="0 0 14 14"><path d="M0 0h14v14H0z" fill="#2a5a4c" /><circle cx="7" cy="7" r="3.500" stroke="#4d8c7a" /><path d="M7 4v6M4.500 6h5" stroke="#4d8c7a" strokeWidth=".8" /></Svg>
              <TabTitle $fade><Fit w={142}>Notebooks and Git Repos | Amaz</Fit></TabTitle><Close s={8} c="#ddd" t={1.100} />
            </Tab>
            <Tab>
              <Ink w={13} vb="0 0 14 14" c="#e07a2c" s={1.800}><path d="M1.500 4.500C4 1 10 1 12.500 4.500M1.500 9.500C4 13 10 13 12.500 9.500" /></Ink>
              <TabTitle><Fit w={118.500}>File_Check_W... - JupyterLab</Fit></TabTitle><Close s={8} c="#ddd" t={1.100} />
            </Tab>
            <Tab $active>
              <ActiveFavicon />
              <TabTitle $fade><Fit w={141}>9  ARIMA models – Forecasting: P</Fit></TabTitle><Close s={8} c="#ddd" t={1.100} />
            </Tab>
            <ToolSlot $w={29}><Ink w={12} h={14} vb="0 0 12 14" c="#ddd" s={1.200}><path d="M6 .5v11M.5 6h11" /></Ink></ToolSlot>
            <TabControls>
              <ToolSlot $w={37}><Ink w={9} h={3} vb="0 0 9 3" c="#ddd" s={1}><path d="M.5 1.500h8" /></Ink></ToolSlot>
              <ToolSlot $w={37}><Restore s={9} c="#ddd" t={1.900} /></ToolSlot>
              <ToolSlot $w={37}><Close s={9} c="#ddd" t={1.100} /></ToolSlot>
            </TabControls>
          </TabStrip>
          <NavBar>
            <ToolSlot $w={29}><Ink w={14} h={12} vb="0 0 14 12" c="#ddd" s={1.200}><path d="M13 6H1M6 1 1 6l5 5" /></Ink></ToolSlot>
            <ToolSlot $w={29}><Close s={11} c="#ccc" t={1.200} /></ToolSlot>
            <Address>
              <Ink w={11} h={13} vb="0 0 11 13" c="#ddd" s={1.200}><rect x="1" y="4.500" width="9" height="7.500" rx="1.500" /><path d="M3.500 4.500V3a2 2 0 0 1 4 0v1.500M5.500 8v.5" /></Ink>
              <Url><Fit w={218.500}>https://<b>otexts.com</b>/fpppy/nbs/09-arima.html</Fit></Url>
              <Ink w={13} vb="0 0 13 13" c="#999" s={1}><path d="m1 12 3.500-9L8 12M2.300 9h4.400M8.500 2c.8 1 .8 2 0 3M10.500 1c1.500 1.700 1.500 3.500 0 5" /></Ink>
              <ToolSlot $w={11} />
              <Ink w={14} vb="0 0 14 14" c="#999" s={1.100}><path d="m7 1 1.800 4 4.200.4-3.200 2.900 1 4.200L7 10.300 3.200 12.500l1-4.200L1 5.400 5.200 5z" /></Ink>
            </Address>
            <ToolSlot $w={29}><Ink w={13} vb="0 0 13 13" c="#ddd" s={1.200}><path d="M2 3h2.500a1.700 1.700 0 0 1 3.400 0H11v3a1.500 1.500 0 0 0 0 3v3H2V9a1.500 1.500 0 0 1 0-3z" /></Ink></ToolSlot>
            <NavRule />
            <ToolSlot $w={29}><Ink w={14} vb="0 0 14 14" c="#ddd" s={1.200}><path d="M8 5 6 1 4.500 5 1 5.500l2.500 3-.8 4L6 10.500M9 6h4M8.500 9H13M9 12h4" /></Ink></ToolSlot>
            <ToolSlot $w={28}><Svg w={19} vb="0 0 20 20"><circle cx="10" cy="10" r="10" fill="#cdcac8" /><circle cx="10" cy="7.500" r="3.800" fill="#8c8986" /><path d="M3.500 16c1-6 12-6 13 0-3 4.500-10 4.500-13 0z" fill="#8c8986" /></Svg></ToolSlot>
            <ToolSlot $w={30}><Dots s={11} c="#ddd" r={1.200} /></ToolSlot>
            <ToolSlot $w={31}><CopilotMark s={18} /></ToolSlot>
          </NavBar>

          <PageRow>
            <Book>
              <BookTitle>
                <Fit w={168}>Forecasting: Principles</Fit><br />
                <Fit w={125.500}>and Practice, the</Fit><br />
                <Fit w={100.500}>Pythonic Way</Fit>
              </BookTitle>
              <Toc>{toc.map(([t, w], i) => <TocItem key={t} $on={i === 9}><Fit w={w}>{t}</Fit></TocItem>)}</Toc>
              <HScroll>
                <Svg w={7} h={8} vb="0 0 7 8"><path d="M7 0v8L0 4z" fill="#666" /></Svg>
                <HThumb />
                <Svg w={6} h={8} vb="0 0 7 8"><path d="M0 0v8l7-4z" fill="#777" /></Svg>
              </HScroll>
            </Book>
            <Paper>
              <Article>
                <H1><Fit w={124.500}>{"Chapter 9  "}</Fit><Fit w={164.500}>ARIMA models</Fit></H1>
                <Details><Svg w={8} h={9} vb="0 0 8 9"><path d="M0 0v9l8-4.500z" fill="#666" /></Svg><Fit w={220.500}>Load common libraries and settings</Fit></Details>
                <Details><Svg w={8} h={9} vb="0 0 8 9"><path d="M0 0v9l8-4.500z" fill="#666" /></Svg><Fit w={149.500}>Load additional libraries</Fit></Details>
                <Paras items={intro} />
                <H2><Fit w={26}>{"9.1 "}</Fit><Fit w={250}>Stationarity and differencing</Fit></H2>
                <Paras items={section} />
              </Article>
              <Aside>
                <AsideHead $bold $gap={43.500}><Fit w={43}>Sections</Fit></AsideHead>
                <AsideHead $gap={21}><Fit w={21}>Data</Fit></AsideHead>
                {files.map(([t, w]) => <FileRow key={t}><LinkIcon /><Fit w={w}>{t}</Fit></FileRow>)}
              </Aside>
            </Paper>
            <VScroll>
              <Svg w={7} h={6} vb="0 0 8 7"><path d="M0 7h8L4 0z" fill="#9c9c9c" /></Svg>
              <VThumb />
              <Svg w={8} h={6} vb="0 0 8 6"><path d="M0 0h8L4 6z" fill="#9c9c9c" /></Svg>
            </VScroll>
          </PageRow>

          <InnerBar>
            <ToolSlot $w={18} />
            <StartIcon s={19} />
            <InnerSearch><Magnifier s={12} c="#c6c2ca" t={2.200} /><Fit w={33}>Search</Fit></InnerSearch>
            <InnerSlot $w={35}><FolderIcon s={20} /><InnerMark /></InnerSlot>
            <InnerSlot $w={35}><NotepadIcon s={20} /></InnerSlot>
            <InnerSlot $w={35}>
              <Svg w={21}><rect x="4" y="2" width="27" height="32" rx="2" fill="#eef3e6" /><path d="M6 12h21v19H6z" fill="#7cc23a" /><path d="M11 15v11h5M19 18h5" stroke="#234b10" strokeWidth="2.500" /><path d="m21 23 10-18 3 2-10 18-4 2z" fill="#f0c435" /></Svg>
            </InnerSlot>
            <InnerSlot $w={35.500}>
              <Svg w={21}><rect x="2" y="2" width="25" height="24" rx="2" fill="#f2f2f2" stroke="#cf3f2d" strokeWidth="3" strokeDasharray="3 4" /><path d="m18 16 10 12M31 18 20 28" stroke="#b9d8ea" strokeWidth="3" /><circle cx="20" cy="31" r="3" stroke="#2f9bd8" strokeWidth="2.500" /><circle cx="31" cy="26" r="3" stroke="#2f9bd8" strokeWidth="2.500" /></Svg>
            </InnerSlot>
            <InnerSlot $w={35.500}><ExcelIcon s={20} /><InnerMark /></InnerSlot>
            <InnerSlot $w={35}><WordIcon s={20} /></InnerSlot>
            <InnerSlot $w={35}><OutlookIcon s={20} /><InnerMark /></InnerSlot>
            <InnerSlot $w={35}>
              <Svg w={20}><path d="M26 2v32l9-4V6z" fill="#2aa4ef" /><path d="m26 2-24 21 4 4 20-15zM26 34 2 13l4-4 20 15z" fill="#1585cf" /></Svg>
            </InnerSlot>
            <InnerSlot $w={33} $tile="#964752"><TeamsIcon s={19} /><BusyDot /><InnerMark /></InnerSlot>
            <ToolSlot $w={2} />
            <InnerSlot $w={33} $tile="#43283a"><EdgeIcon s={20} /><InnerMark $wide /></InnerSlot>
            <InnerSlot $w={37}><ChromeIcon s={20} /></InnerSlot>
            <InnerTray>
              <InnerSlot $w={26}><Ink w={9} h={6} vb="0 0 9 6" c="#eee" s={1.400}><path d="m1 5 3.500-4L8 5" /></Ink></InnerSlot>
              <InnerSlot $w={25}><Ink w={10} vb="0 0 10 10" c="#ddd" s={1.200}><circle cx="5" cy="5" r="4.200" /></Ink></InnerSlot>
              <InnerSlot $w={26}><Svg w={13}><rect x="8" y="2" width="27" height="32" rx="2" fill="#ca64ea" /><rect x="27" y="10" width="8" height="16" fill="#9332bf" /><Letter c="#7719aa" ch="N" /></Svg></InnerSlot>
              <InnerSlot $w={25}><Svg w={13}><circle cx="18" cy="18" r="17" fill="#3f7fc4" /><path d="M27 10a12 12 0 1 0 3 9c-1 5-11 6-12 0 0-3 3-4 5-3" stroke="#e4f0fb" strokeWidth="3" /></Svg></InnerSlot>
              <InnerSlot $w={26}><OutlookIcon s={14} /></InnerSlot>
              <InnerSlot $w={25}><Svg w={14}><circle cx="20" cy="7" r="5" fill="#7b83eb" /><circle cx="31" cy="8" r="4" fill="#5059c9" /><path d="M12 14h22v10a10 10 0 0 1-22 2z" fill="#5059c9" /><Letter c="#4b53bc" ch="T" /><circle cx="27" cy="27" r="8" fill="#c4314b" /><path d="M23 27h8" stroke="#fff" strokeWidth="3" /></Svg></InnerSlot>
              <InnerSlot $w={26}><Cloud s={14} /></InnerSlot>
              <InnerSlot $w={25}><Svg w={13}><path d="M0 0h36v36H0z" fill="#0e9ad6" /><path d="M10 24c-6 0-6-8 0-8 2-7 13-7 15 0 8 0 8 9 1 9H15l9-7" stroke="#fff" strokeWidth="3.500" /></Svg></InnerSlot>
              <InnerSlot $w={26}><Svg w={14}><path d="M16 1 30 6v11c0 9-7 14-14 17C9 31 2 26 2 17V6z" fill="#1f9de0" /><circle cx="26" cy="26" r="9" fill="#15803a" /><path d="m22 26 3 3 5-6" stroke="#fff" strokeWidth="2.500" /></Svg></InnerSlot>
              <InnerSlot $w={26} $tile="#dba1e3"><MicGlyph s={16} c="#111" /></InnerSlot>
              <InnerText $w={34} $align="center"><Fit w={18.500}>ENG</Fit><Fit w={10}>IN</Fit></InnerText>
              <InnerSlot $w={25}><Ink w={13} h={11} vb="0 0 13 11" c="#eee" s={1.200}><path d="M1 4c3-3.500 8-3.500 11 0M3 6.300c2-2.200 5-2.200 7 0M5 8.300c1-.8 2-.8 3 0M6.500 9.700v.1" /></Ink></InnerSlot>
              <InnerSlot $w={15}><Volume s={14} c="#ddd" /></InnerSlot>
              <InnerSlot $w={25}><Battery s={14} c="#eee" /></InnerSlot>
              <InnerText $w={51} $align="flex-end"><Fit w={34}>3:58 PM</Fit><Fit w={44}>9/24/2025</Fit></InnerText>
              <InnerSlot $w={24}><Svg w={13} vb="0 0 14 14"><path d="M2 10V6a4.500 4.500 0 0 1 9 0v4l1 1.500H1zM5 12.500h3" fill="#eee" stroke="#eee" /><path d="M5 6h3L5 9h3" stroke="#3a1a1a" strokeWidth="1" /><path d="M10.500 1h3l-3 3h3" stroke="#eee" strokeWidth="1" /></Svg></InnerSlot>
              <ToolSlot $w={12} />
            </InnerTray>
          </InnerBar>
          <NameTag $left={7} $bottom={12} $bg="rgba(24,24,26,.76)"><Fit w={104}>Rohit Pandey</Fit></NameTag>
          <Pointer><Svg w={11} h={15} vb="0 0 11 15"><path d="M.7 1v11.500l2.800-2.300 1.700 3.800 2-1-1.700-3.700h3.700z" fill="#fff" stroke="#555" strokeWidth=".9" /></Svg></Pointer>
        </Shared>

        <Roster>
          <Tile $h={197} $bg="radial-gradient(ellipse at 0% 35%, #f0e3f0 0, rgba(240,227,240,0) 28%), linear-gradient(115deg, #f1ecf1 0%, #e3e5f1 32%, #e2eaf1 58%, #e0f1f0 78%, #e3f4ee 100%)">
            <Avatar $size={99} $bg="#cfd9df" $fg="#14343b" $shadow><Fit w={46}>RP</Fit></Avatar>
            <NameTag $left={11} $bottom={11} $bg="#717176"><Fit w={104}>Rohit Pandey</Fit></NameTag>
          </Tile>
          <Tile $h={196} $bg="radial-gradient(ellipse at 8% 32%, #dfe3f1 0, rgba(223,227,241,0) 55%), linear-gradient(175deg, #e7eef2 0%, #e6e9ee 40%, #ebe9ec 65%, #f1f1f1 90%)">
            <Avatar $size={96} $bg="#f5d3de" $fg="#7a1b3b"><Fit w={46}>RB</Fit></Avatar>
          </Tile>
        </Roster>
      </Stage>

      <TaskBar>
        <Widget>
          <Svg w={38}>
            <defs><linearGradient id="sun" x1="0" y1="0" x2="0" y2="1"><stop stopColor="#ffce1f" /><stop offset="1" stopColor="#e8610a" /></linearGradient></defs>
            <circle cx="18" cy="18.500" r="15" fill="url(#sun)" />
            <path d="M8 10h7M4 16h13M1 22h19M25 22h6M1 28.500h11M18 28.500h12" stroke="#e9cf9b" strokeWidth="2.800" />
          </Svg>
          <Badge $left={46} $top={-7}><Fit w={18}>9+</Fit></Badge>
        </Widget>
        <StartIcon s={35} />
        <SearchPill><Magnifier s={24} c="#222" t={2.200} /><Fit w={61}>Search</Fit></SearchPill>
        <AppSlot>
          <Svg><defs><linearGradient id="tv" x1="0" y1="0" x2="0" y2="1"><stop stopColor="#474747" /><stop offset="1" stopColor="#1d1d1d" /></linearGradient></defs><rect x="0" y="10" width="27" height="25" rx="2" fill="url(#tv)" /><rect x="9" y="1" width="27" height="25" rx="2" fill="#fafafa" /><path d="M9 10h18v16H11a2 2 0 0 1-2-2z" fill="#b5b5b5" /></Svg>
        </AppSlot>
        <AppSlot><CopilotMark s={36} tag /></AppSlot>
        <AppSlot><FolderIcon s={36} /><RunMark /></AppSlot>
        <AppSlot><EdgeIcon s={36} /><RunMark /></AppSlot>
        <AppSlot><ActiveTile><TeamsIcon s={36} /></ActiveTile><Badge $left={35} $top={8}>2</Badge><RunMark $active /></AppSlot>
        <AppSlot><ChromeIcon s={36} /><RunMark /></AppSlot>
        <AppSlot><OutlookIcon s={36} /><RunMark /></AppSlot>
        <AppSlot><ExcelIcon s={36} /><RunMark /></AppSlot>
        <AppSlot><WordIcon s={36} /><RunMark /></AppSlot>
        <AppSlot><NotepadIcon s={36} /><RunMark /></AppSlot>
        <AppSlot><PhotosIcon /><RunMark /></AppSlot>
        <Tray>
          <TraySlot $w={48}><Ink w={18} h={11} vb="0 0 18 11" c="#222" s={2}><path d="m1.500 9.500 7.500-8 7.500 8" /></Ink></TraySlot>
          <TraySlot $w={48}><Cloud s={26} sync /></TraySlot>
          <MicTile><MicGlyph s={28} c="#fff" /></MicTile>
          <TrayText $w={66} $align="center" $lh={23} $lift={1}><Fit w={34}>ENG</Fit><Fit w={17}>IN</Fit></TrayText>
          <TraySlot $w={48}><Ink w={26} vb="0 0 26 26" c="#222" s={1.700}><path d="M15 2H4a3 3 0 0 0-3 3v12a3 3 0 0 0 3 3h14M8 20v4M14 20v4M5.500 24.500h12" /><rect x="18.500" y="1.500" width="5.500" height="9" rx="1.500" /><path d="M18.500 5h5.500M21.300 10.500v14" /></Ink></TraySlot>
          <TraySlot $w={24}><Volume s={26} c="#222" t={1.700} /></TraySlot>
          <TraySlot $w={48}><Battery s={26} c="#222" t={1.800} /></TraySlot>
          <TrayText $w={95} $align="flex-end" $lh={25} $lift={3}><Fit w={63}>3:58 PM</Fit><Fit w={82}>9/24/2025</Fit></TrayText>
          <TraySlot $w={30} />
        </Tray>
      </TaskBar>
    </Screen>
  );
}
